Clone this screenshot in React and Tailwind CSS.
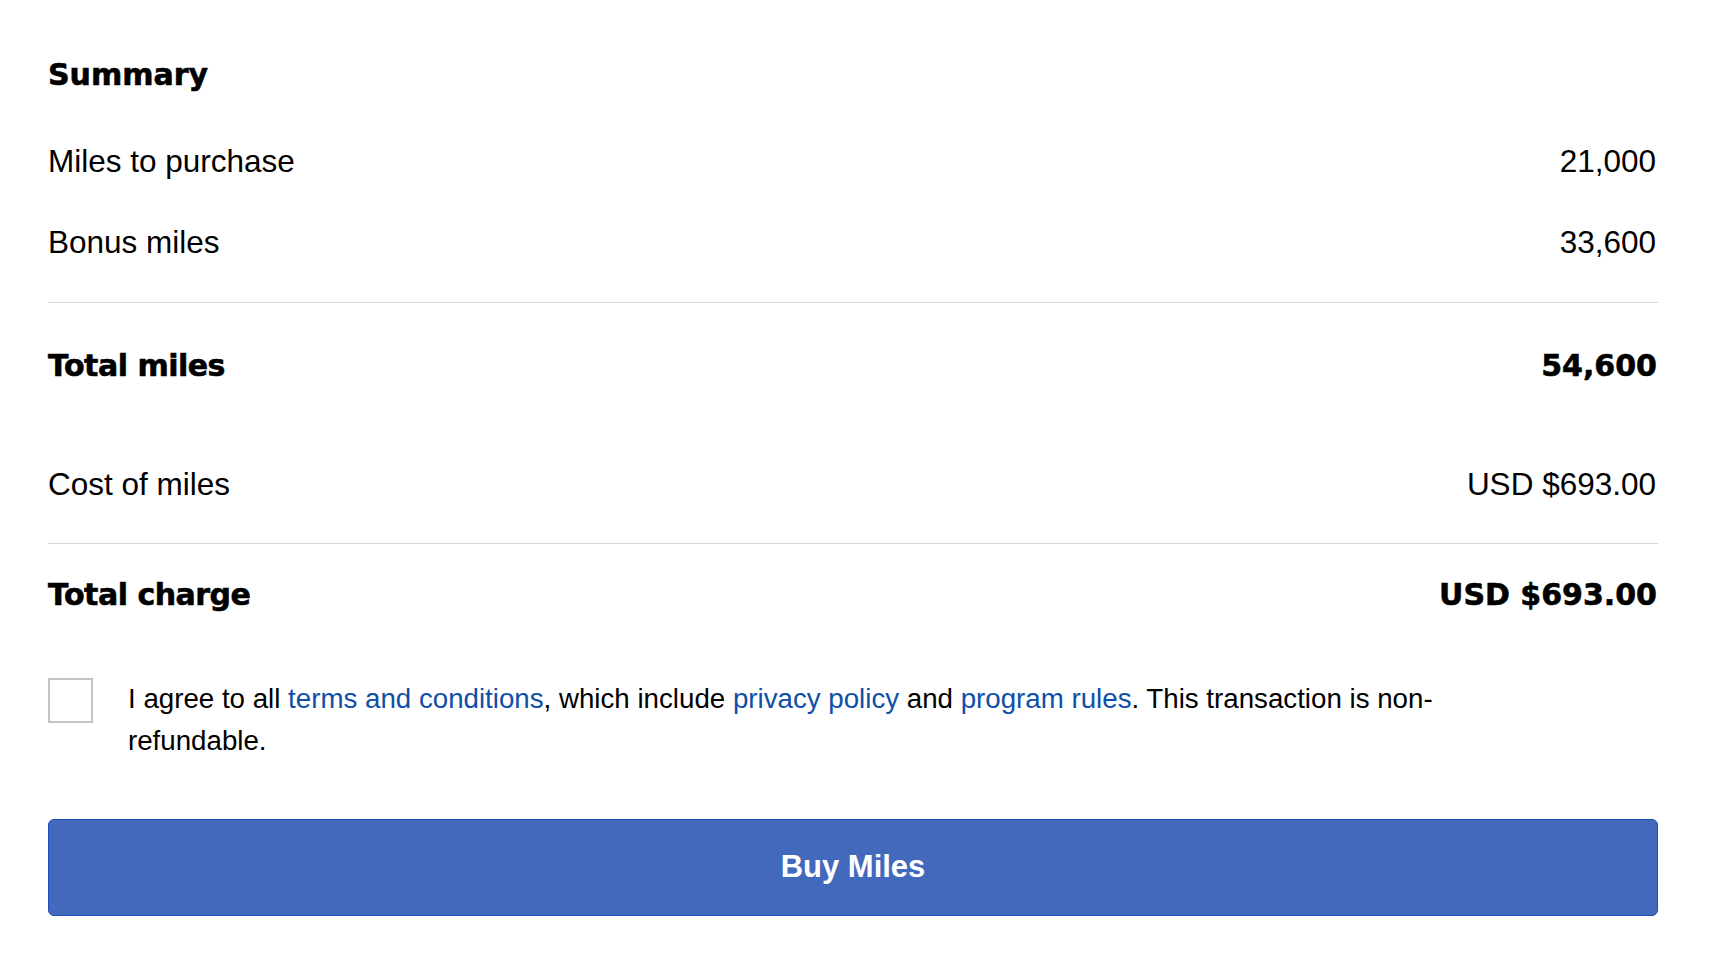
import React from "react";

const REG = { fontFamily: '"Liberation Sans", Arial, sans-serif' };
const BOLD = { fontFamily: '"DejaVu Sans", "Liberation Sans", sans-serif' };

function Row({ label, value, bold, className = "" }) {
  if (bold) {
    return (
      <div
        className={"flex h-[36px] items-center justify-between pr-[1px] text-[30px] leading-[36px] font-bold text-black [-webkit-text-stroke:0.6px_#000] " + className}
        style={BOLD}
      >
        <span className="tracking-[-0.5px]">{label}</span>
        <span>{value}</span>
      </div>
    );
  }
  return (
    <div
      className={"flex h-[36px] items-center justify-between pr-[2px] text-[31.5px] leading-[36px] text-black " + className}
      style={REG}
    >
      <span>{label}</span>
      <span>{value}</span>
    </div>
  );
}

export default function App() {
  return (
    <div className="min-h-[978px] w-full bg-white">
      <div className="pl-[48px] pr-[54px] pt-[57px]">
        <h2
          className="h-[36px] text-[30px] leading-[36px] font-bold text-black [-webkit-text-stroke:0.6px_#000]"
          style={BOLD}
        >
          Summary
        </h2>

        <Row className="mt-[50px]" label="Miles to purchase" value="21,000" />
        <Row className="mt-[45px]" label="Bonus miles" value="33,600" />

        <div className="mt-[42px] h-px bg-[#d6d6d6]" />

        <Row className="mt-[45px]" bold label="Total miles" value="54,600" />

        <Row className="mt-[82px]" label="Cost of miles" value="USD $693.00" />

        <div className="mt-[41px] h-px bg-[#d6d6d6]" />

        <Row className="mt-[33px]" bold label="Total charge" value="USD $693.00" />

        <div className="mt-[65px] flex items-start gap-[35px]">
          <div className="h-[45px] w-[45px] shrink-0 border-2 border-[#c2c4c7] bg-white" />
          <p
            className="max-w-[1440px] text-[27.7px] leading-[42px] text-black"
            style={REG}
          >
            I agree to all{" "}
            <a className="text-[#0f4fa8]">terms and conditions</a>, which
            include <a className="text-[#0f4fa8]">privacy policy</a> and{" "}
            <a className="text-[#0f4fa8]">program rules</a>. This transaction
            is non-
            <br />
            refundable.
          </p>
        </div>

        <button
          className="mt-[57px] flex h-[97px] w-full items-center justify-center rounded-[6px] border border-[#1b4fb6] bg-[#4369bc] text-[31px] font-bold text-white"
          style={REG}
        >
          Buy Miles
        </button>
      </div>
    </div>
  );
}
